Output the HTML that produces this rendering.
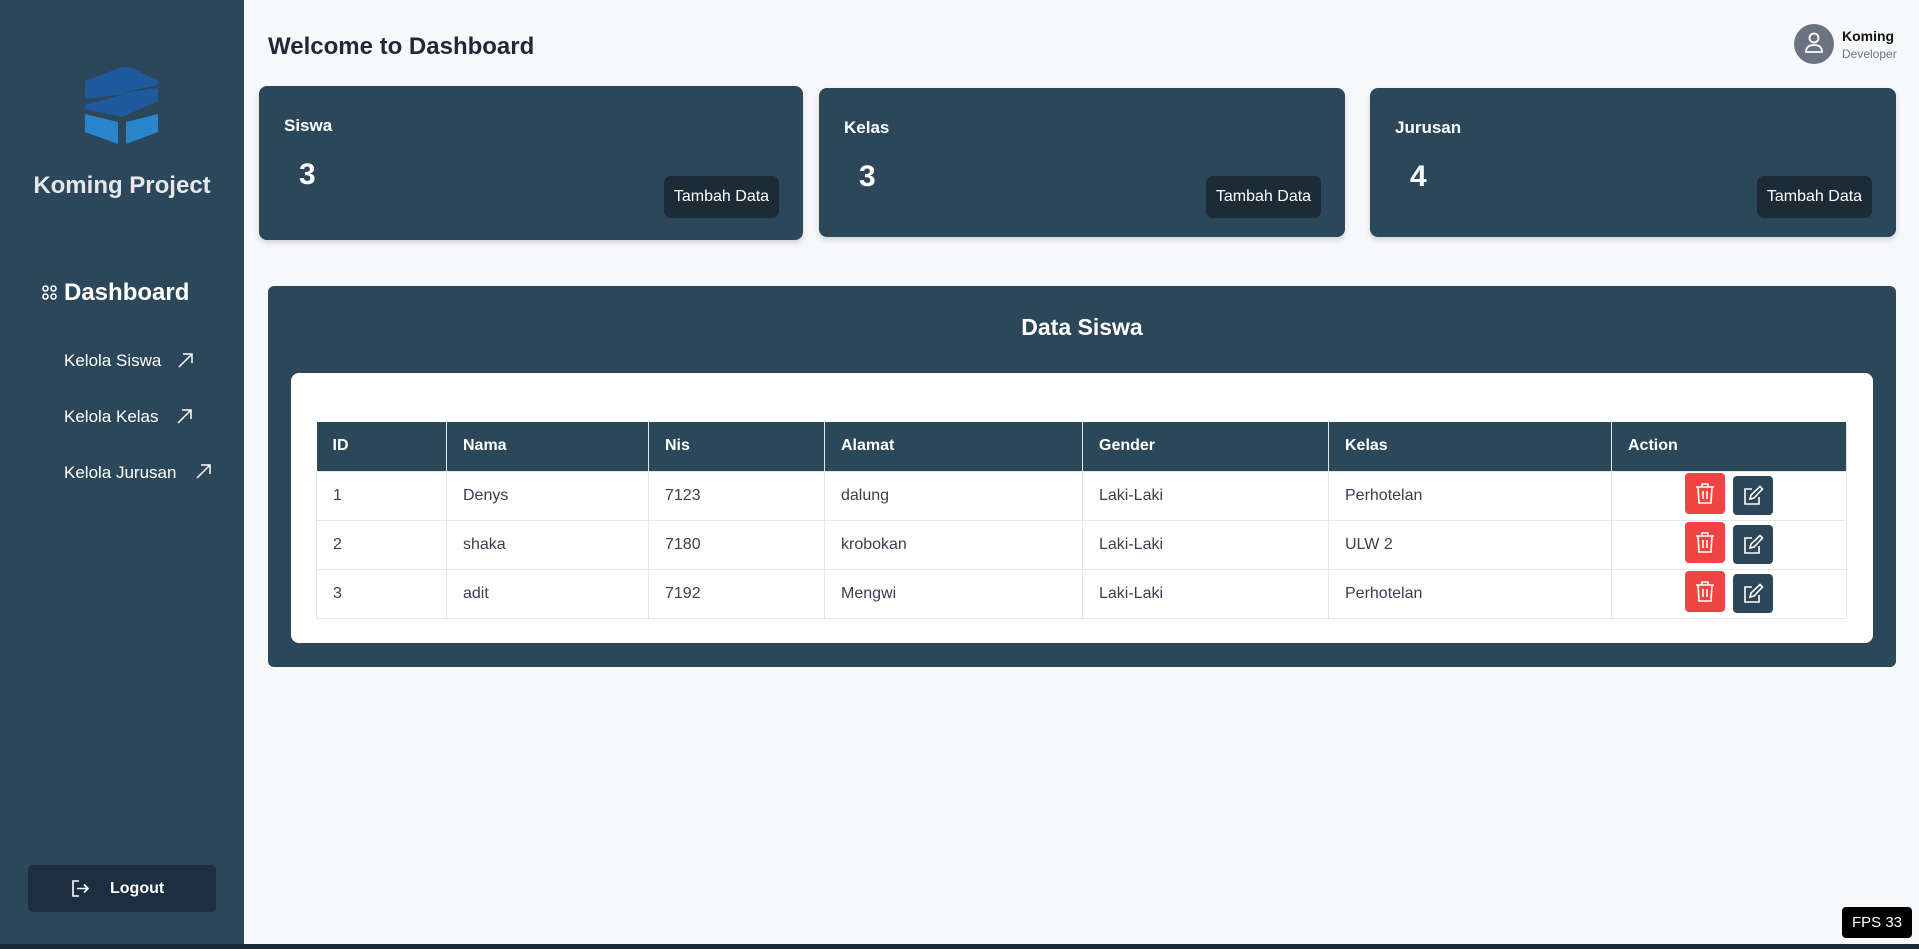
<!DOCTYPE html>
<html><head><meta charset="utf-8"><style>
*{box-sizing:border-box;margin:0;padding:0}
body{width:1919px;height:949px;background:#f7f8fa;font-family:"Liberation Sans","DejaVu Sans",sans-serif;position:relative;overflow:hidden;color:#1f2937}
.sb{position:absolute;left:0;top:0;width:244px;height:944px;background:#2c4759}
.bottom{position:absolute;left:0;top:944px;width:1919px;height:5px;background:#1b2838}
.abs{position:absolute}
.card{position:absolute;background:#2c4759;border-radius:8px;box-shadow:0 3px 6px rgba(0,0,0,.15);color:#fff}
.card .l{position:absolute;left:25px;top:30px;font-size:17px;font-weight:bold}
.card .n{position:absolute;left:40px;top:72px;font-size:30px;font-weight:bold}
.card .b{position:absolute;right:24px;top:90px;width:115px;height:42px;background:#1c2b36;border-radius:7px;font-size:16px;line-height:42px;text-align:center}
table{position:absolute;left:316px;top:422px;width:1531px;border-collapse:collapse;font-size:16px}
th{background:#2c4759;color:#fff;text-align:left;height:49px;padding-left:16px;font-weight:bold;border-right:1px solid #e5e7eb}
td{height:49px;padding-left:16px;border:1px solid #e5e7eb;color:#374151;background:#fff}
.del{position:absolute;width:40px;height:41px;background:#ef4444;border-radius:4px}
.ed{position:absolute;width:40px;height:39px;background:#2c4759;border-radius:4px}
.del svg,.ed svg{position:absolute;left:9px;top:9px}
</style></head><body>
<div class="sb">
<svg class="abs" style="left:84px;top:67px" width="78" height="80" viewBox="0 0 78 80">
<path d="M1 14 L38 0 Q44 -1 50 2 L74 14 L74 18 L36 26 L74 21 L74 34 L38 50 L1 42 L1 38 L40 27 L1 32 Z" fill="#1f5a9e"/>
<path d="M1 47 L34 55 L34 77 L1 65 Z M42 55 L74 47 L74 65 L42 77 Z" fill="#2a86cc"/>
</svg>
<div class="abs" style="left:0;width:244px;top:172px;text-align:center;color:#e5e7eb;font-size:24px;font-weight:bold">Koming Project</div>
<svg class="abs" style="left:42px;top:285px" width="15" height="15" viewBox="0 0 15 15" fill="none" stroke="#fff" stroke-width="1.6"><circle cx="3.5" cy="3.5" r="2.5"/><circle cx="11.5" cy="3.5" r="2.5"/><circle cx="3.5" cy="11.5" r="2.5"/><circle cx="11.5" cy="11.5" r="2.5"/></svg>
<div class="abs" style="left:64px;top:279px;color:#fff;font-size:24px;font-weight:bold">Dashboard</div>
<div class="abs" style="left:64px;top:351px;color:#fff;font-size:17px">Kelola Siswa</div>
<div class="abs" style="left:64px;top:407px;color:#fff;font-size:17px">Kelola Kelas</div>
<div class="abs" style="left:64px;top:463px;color:#fff;font-size:17px">Kelola Jurusan</div>
<svg class="abs" style="left:178px;top:353px" width="15" height="15" viewBox="0 0 15 15" stroke="#fff" stroke-width="1.5" fill="none"><path d="M1 14 L14 1 M5 1 H14 V10"/></svg>
<svg class="abs" style="left:177px;top:409px" width="15" height="15" viewBox="0 0 15 15" stroke="#fff" stroke-width="1.5" fill="none"><path d="M1 14 L14 1 M5 1 H14 V10"/></svg>
<svg class="abs" style="left:196px;top:464px" width="15" height="15" viewBox="0 0 15 15" stroke="#fff" stroke-width="1.5" fill="none"><path d="M1 14 L14 1 M5 1 H14 V10"/></svg>
<div class="abs" style="left:28px;top:865px;width:188px;height:47px;background:#1c2f40;border-radius:5px"></div>
<svg class="abs" style="left:71px;top:880px" width="18" height="17" viewBox="0 0 18 17" stroke="#fff" stroke-width="1.6" fill="none"><path d="M8 1 H2 V16 H8 M6 8.5 H17 M13 4.5 L17 8.5 L13 12.5"/></svg>
<div class="abs" style="left:110px;top:880px;color:#fff;font-size:16px;font-weight:bold">Logout</div>
</div>
<div class="bottom"></div>
<div class="abs" style="left:268px;top:33px;font-size:24px;font-weight:bold;color:#1f2937">Welcome to Dashboard</div>
<div class="abs" style="left:1794px;top:24px;width:40px;height:40px;border-radius:50%;background:#6b7280"></div>
<svg class="abs" style="left:1804px;top:32px" width="20" height="22" viewBox="0 0 20 22" stroke="#fff" stroke-width="1.8" fill="none"><circle cx="10" cy="6" r="4.5"/><path d="M2 20 Q2 13 10 13 Q18 13 18 20 Z"/></svg>
<div class="abs" style="left:1842px;top:28px;font-size:14px;font-weight:bold;color:#111">Koming</div>
<div class="abs" style="left:1842px;top:47px;font-size:12px;color:#6b7280">Developer</div>
<div class="card" style="left:259px;top:86px;width:544px;height:154px"><div class="l">Siswa</div><div class="n">3</div><div class="b">Tambah Data</div></div>
<div class="card" style="left:819px;top:88px;width:526px;height:149px"><div class="l">Kelas</div><div class="n">3</div><div class="b" style="top:88px">Tambah Data</div></div>
<div class="card" style="left:1370px;top:88px;width:526px;height:149px"><div class="l">Jurusan</div><div class="n">4</div><div class="b" style="top:88px">Tambah Data</div></div>
<div class="abs" style="left:268px;top:286px;width:1628px;height:381px;background:#2c4759;border-radius:6px"></div>
<div class="abs" style="left:268px;top:314px;width:1628px;text-align:center;color:#fff;font-size:23px;font-weight:bold">Data Siswa</div>
<div class="abs" style="left:291px;top:373px;width:1582px;height:270px;background:#fff;border-radius:8px"></div>
<table>
<tr><th style="width:130px">ID</th><th style="width:202px">Nama</th><th style="width:176px">Nis</th><th style="width:258px">Alamat</th><th style="width:246px">Gender</th><th style="width:283px">Kelas</th><th>Action</th></tr>
<tr><td>1</td><td>Denys</td><td>7123</td><td>dalung</td><td>Laki-Laki</td><td>Perhotelan</td><td></td></tr>
<tr><td>2</td><td>shaka</td><td>7180</td><td>krobokan</td><td>Laki-Laki</td><td>ULW 2</td><td></td></tr>
<tr><td>3</td><td>adit</td><td>7192</td><td>Mengwi</td><td>Laki-Laki</td><td>Perhotelan</td><td></td></tr>
</table>
<div class="abs" style="left:1842px;top:907px;width:70px;height:31px;background:#000;border-radius:4px;color:#fff;font-size:15px;line-height:31px;text-align:center">FPS 33</div>
<div class="del" style="left:1685px;top:473px"><svg width="22" height="23" viewBox="0 0 22 23" stroke="#fff" stroke-width="1.6" fill="none"><path d="M2 5 H20 M8 5 V2 H14 V5 M4 5 L5 21 H17 L18 5 M9 9 V17 M13 9 V17"/></svg></div>
<div class="ed" style="left:1733px;top:476px"><svg width="22" height="22" viewBox="0 0 22 22" stroke="#fff" stroke-width="1.6" fill="none"><path d="M10 4 H3 V19 H17 V12 M8 14 L9 10 L18 1.5 L20.5 4 L12 13 Z"/></svg></div>
<div class="del" style="left:1685px;top:522px"><svg width="22" height="23" viewBox="0 0 22 23" stroke="#fff" stroke-width="1.6" fill="none"><path d="M2 5 H20 M8 5 V2 H14 V5 M4 5 L5 21 H17 L18 5 M9 9 V17 M13 9 V17"/></svg></div>
<div class="ed" style="left:1733px;top:525px"><svg width="22" height="22" viewBox="0 0 22 22" stroke="#fff" stroke-width="1.6" fill="none"><path d="M10 4 H3 V19 H17 V12 M8 14 L9 10 L18 1.5 L20.5 4 L12 13 Z"/></svg></div>
<div class="del" style="left:1685px;top:571px"><svg width="22" height="23" viewBox="0 0 22 23" stroke="#fff" stroke-width="1.6" fill="none"><path d="M2 5 H20 M8 5 V2 H14 V5 M4 5 L5 21 H17 L18 5 M9 9 V17 M13 9 V17"/></svg></div>
<div class="ed" style="left:1733px;top:574px"><svg width="22" height="22" viewBox="0 0 22 22" stroke="#fff" stroke-width="1.6" fill="none"><path d="M10 4 H3 V19 H17 V12 M8 14 L9 10 L18 1.5 L20.5 4 L12 13 Z"/></svg></div>
</body></html>
